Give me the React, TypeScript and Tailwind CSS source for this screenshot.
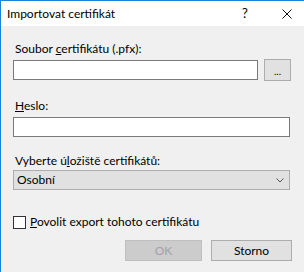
export default function App() {
  return (
    <div className="flex h-[272px] w-[304px] flex-col border-l border-t border-[#1883d7] bg-[#f0f0f0] font-['Lato','Liberation_Sans',sans-serif] text-[12px] text-black">
      {/* title bar */}
      <div className="flex h-[25px] items-center bg-white pl-[6px]">
        <span className="flex-1 pt-[1px]">Importovat certifikát</span>
        <span className="w-[10px] text-center text-[13px] leading-none">?</span>
        <svg width="10" height="10" viewBox="0 0 10 10" className="ml-[32px] mr-[12px]">
          <path d="M0.5 0.5 L9.5 9.5 M9.5 0.5 L0.5 9.5" stroke="#111" strokeWidth="1" fill="none" />
        </svg>
      </div>

      <div className="flex flex-col pl-[12px] pr-[12px]">
        <label className="mt-[15px] pl-[2px] leading-[16px]">
          Soubor <span className="underline">c</span>ertifikátu (.pfx):
        </label>
        <div className="mt-[2px] flex items-center">
          <div className="h-[20px] w-[245px] border border-[#7a7a7a] bg-white" />
          <button className="ml-[6px] flex h-[22px] w-[27px] items-end justify-center border border-[#adadad] bg-[#e1e1e1] pb-[4px] text-[10px] leading-none">
            ...
          </button>
        </div>

        <label className="mt-[17px] pl-[2px] leading-[16px]">
          <span className="underline">H</span>eslo:
        </label>
        <div className="mt-[3px] h-[20px] w-[277px] border border-[#7a7a7a] bg-white" />

        <label className="mt-[16px] pl-[2px] leading-[16px]">
          Vyberte ú<span className="underline">l</span>ožiště certifikátů:
        </label>
        <div className="mt-[1px] flex h-[20px] w-[277px] items-center border border-[#adadad] bg-[#e1e1e1] pl-[3px] pr-[5px]">
          <span className="flex-1">Osobní</span>
          <svg width="8" height="5" viewBox="0 0 8 5">
            <path d="M0.5 0.5 L4 4 L7.5 0.5" stroke="#555" strokeWidth="1" fill="none" />
          </svg>
        </div>

        <div className="mt-[24px] flex items-center">
          <div className="h-[13px] w-[13px] border border-[#333] bg-white" />
          <span className="ml-[4px] leading-[16px]">
            <span className="underline">P</span>ovolit export tohoto certifikátu
          </span>
        </div>

        <div className="mt-[10px] flex justify-end">
          <button className="h-[21px] w-[77px] border border-[#bfbfbf] bg-[#cccccc] text-[#a3a3a3]">
            OK
          </button>
          <button className="ml-[9px] h-[21px] w-[81px] border border-[#adadad] bg-[#e1e1e1]">
            Storno
          </button>
        </div>
      </div>
    </div>
  );
}
